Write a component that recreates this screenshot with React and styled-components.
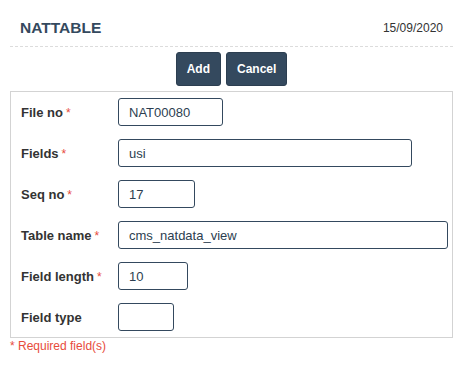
import React from 'react'
import styled, { createGlobalStyle } from 'styled-components'

const GlobalStyle = createGlobalStyle`
  html, body {
    margin: 0;
    padding: 0;
    background: #fff;
    font-family: Arial, "Liberation Sans", sans-serif;
  }
`

const Page = styled.div`
  padding: 0 15px 0 10px;
`

const Header = styled.div`
  display: flex;
  align-items: center;
  justify-content: space-between;
  height: 47px;
  padding: 10px 10px 0 10px;
  box-sizing: border-box;
  border-bottom: 1px dashed #dcdcdc;
`

const Title = styled.h1`
  margin: 0;
  font-size: 15.5px;
  font-weight: 700;
  color: #34495e;
`

const DateText = styled.span`
  font-size: 12px;
  color: #333;
`

const Toolbar = styled.div`
  display: flex;
  justify-content: center;
  gap: 5px;
  padding: 5px 0 5px;
`

const Button = styled.button`
  height: 34px;
  padding: 0 10px;
  border: 1px solid #2c3e50;
  border-radius: 3px;
  background: #34495e;
  color: #fff;
  font-family: Arial, "Liberation Sans", sans-serif;
  font-size: 12px;
  font-weight: 700;
  cursor: pointer;
`

const Panel = styled.div`
  border: 1px solid #d3d3d3;
  padding: 6px 4px 6px 10px;
  display: flex;
  flex-direction: column;
  gap: 13px;
`

const Row = styled.div`
  display: flex;
  align-items: center;
  height: 28px;
`

const Label = styled.label`
  width: 97px;
  flex-shrink: 0;
  font-size: 13px;
  font-weight: 700;
  color: #333;
`

const Star = styled.span`
  color: #e74c3c;
  font-weight: 400;
  font-size: 12px;
  margin-left: 3px;
`

const Input = styled.input`
  box-sizing: border-box;
  width: ${p => p.w}px;
  height: 28px;
  padding: 0 10px;
  border: 1px solid #34495e;
  border-radius: 3px;
  font-family: Arial, "Liberation Sans", sans-serif;
  font-size: 13px;
  color: #2c3e50;
  outline: none;
`

const Note = styled.div`
  margin-top: 1px;
  font-size: 12px;
  color: #e74c3c;
`

const fields = [
  { label: 'File no', value: 'NAT00080', w: 105, req: true },
  { label: 'Fields', value: 'usi', w: 294, req: true },
  { label: 'Seq no', value: '17', w: 77, req: true },
  { label: 'Table name', value: 'cms_natdata_view', w: 330, req: true },
  { label: 'Field length', value: '10', w: 70, req: true },
  { label: 'Field type', value: '', w: 56, req: false },
]

export default function App() {
  return (
    <Page>
      <GlobalStyle />
      <Header>
        <Title>NATTABLE</Title>
        <DateText>15/09/2020</DateText>
      </Header>
      <Toolbar>
        <Button>Add</Button>
        <Button>Cancel</Button>
      </Toolbar>
      <Panel>
        {fields.map(f => (
          <Row key={f.label}>
            <Label>
              {f.label}
              {f.req && <Star>*</Star>}
            </Label>
            <Input w={f.w} defaultValue={f.value} />
          </Row>
        ))}
      </Panel>
      <Note>* Required field(s)</Note>
    </Page>
  )
}
